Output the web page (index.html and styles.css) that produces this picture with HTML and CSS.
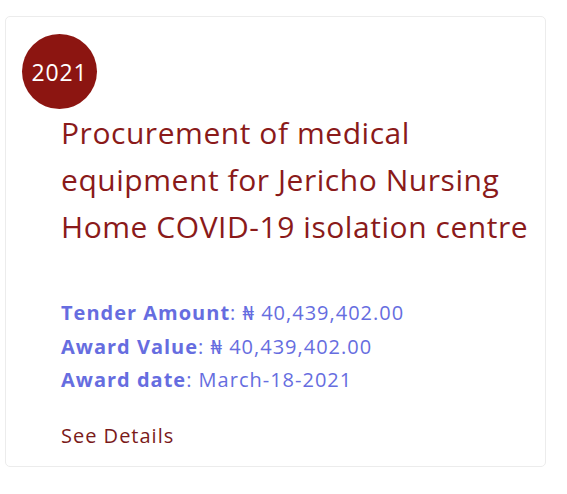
FILE: index.html
```html
<!DOCTYPE html>
<html>
<head>
<meta charset="utf-8">
<link rel="stylesheet" href="styles.css">
</head>
<body>
<div class="card">
  <div class="year">2021</div>
  <div class="content">
    <h2 class="title">Procurement of medical equipment for Jericho Nursing Home COVID-19 isolation centre</h2>
    <div class="meta">
      <div><b>Tender Amount</b>: ₦ 40,439,402.00</div>
      <div><b>Award Value</b>: ₦ 40,439,402.00</div>
      <div><b>Award date</b>: March-18-2021</div>
    </div>
    <a class="link" href="#">See Details</a>
  </div>
</div>
</body>
</html>
```
FILE: styles.css
```css
html, body { margin: 0; padding: 0; background: #fff; }
body { font-family: "Open Sans", "Noto Sans", sans-serif; padding: 16px 0 0 5px; }
.card {
  box-sizing: border-box;
  width: 541px;
  height: 451px;
  border: 1px solid #ececec;
  border-radius: 5px;
  padding: 17px 0 0 16px;
}
.year {
  width: 75px; height: 75px; border-radius: 50%;
  background: #8c1511; color: #fff;
  font-size: 23px;
  letter-spacing: 0.8px;
  display: flex; align-items: center; justify-content: center;
}
.content { padding-left: 39px; padding-right: 6px; }
.title {
  margin: 0;
  font-weight: 400;
  font-size: 30px;
  line-height: 47px;
  letter-spacing: 0.55px;
  color: #8a1a1a;
}
.meta {
  margin-top: 46px;
  font-size: 20px;
  line-height: 33.5px;
  letter-spacing: 1px;
  color: #666de0;
}
.meta b { font-weight: 700; }
.link {
  display: inline-block;
  margin-top: 25px;
  font-size: 20px;
  letter-spacing: 1px;
  color: #7a1a1a;
  text-decoration: none;
}
```
